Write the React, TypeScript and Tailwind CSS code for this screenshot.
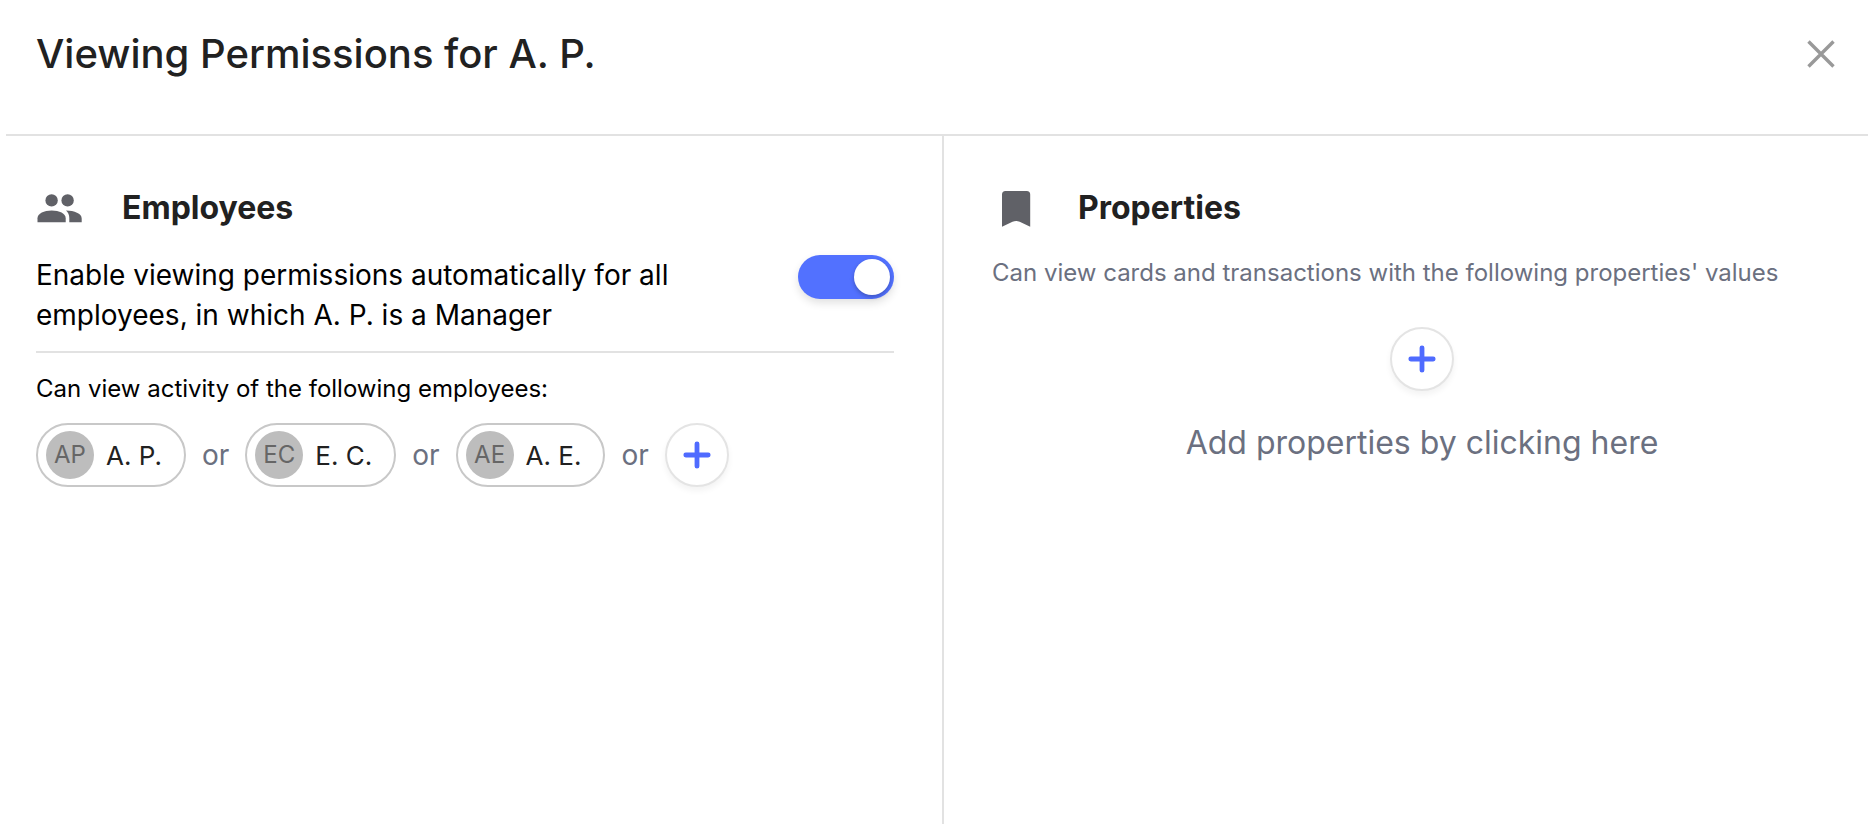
import { useState } from 'react';
import type { ReactNode } from 'react';

interface Employee {
  initials: string;
  name: string;
}

const employees: Employee[] = [
  { initials: 'AP', name: 'A. P.' },
  { initials: 'EC', name: 'E. C.' },
  { initials: 'AE', name: 'A. E.' },
];

function PeopleIcon() {
  return (
    <svg viewBox="0 0 48 48" className="size-12" fill="currentColor" aria-hidden="true">
      <circle cx="15.6" cy="16.4" r="6.2" />
      <circle cx="31.6" cy="16.4" r="6.2" />
      <path d="M1.5 38.3v-4.1c0-4.8 6.6-7.8 14.2-7.8s14 3 14 7.8v4.1z" />
      <path d="M30 26.6c8.400.2 15.700 2.900 15.700 7.800v3.900H33.300v-4.200c0-3.200-1.200-5.600-3.300-7.500z" />
    </svg>
  );
}

function BookmarkIcon() {
  return (
    <svg viewBox="0 0 48 48" className="size-12" fill="currentColor" aria-hidden="true">
      <path d="M13.500 7h21.200a3.500 3.500 0 0 1 3.500 3.500v32.200l-10.500-5c-2.500-1.100-4.700-1.100-7.200 0l-10.500 5V10.500A3.500 3.500 0 0 1 13.500 7z" />
    </svg>
  );
}

function AddButton({ label }: { label: string }) {
  return (
    <button
      type="button"
      aria-label={label}
      className="flex size-16 shrink-0 items-center justify-center rounded-full border-2 border-[#e4e4e4] bg-white text-[#4f6bff] shadow-[0_4px_6px_rgba(0,0,0,0.05)]"
    >
      <svg viewBox="0 0 28 28" className="size-7" fill="none" stroke="currentColor" strokeWidth="4.8" strokeLinecap="round">
        <path d="M14 2.8v22.4M2.8 14h22.4" />
      </svg>
    </button>
  );
}

function EmployeeChip({ initials, name }: Employee) {
  return (
    <button type="button" className="flex h-16 items-center gap-3 rounded-full border-2 border-[#c8c8c8] bg-white pl-2 pr-[22px]">
      <span className="flex size-12 items-center justify-center rounded-full bg-[#bdbdbd] text-[24px] text-[#666666]">
        {initials}
      </span>
      <span className="text-[26px] text-[#212121]">{name}</span>
    </button>
  );
}

function SectionTitle({ icon, children }: { icon: ReactNode; children: ReactNode }) {
  return (
    <div className="flex h-12 items-center gap-[38px] text-[#606167]">
      {icon}
      <h2 className="text-[32px] font-bold text-[#212121]">{children}</h2>
    </div>
  );
}

export default function App() {
  const [autoEnabled, setAutoEnabled] = useState(true);

  return (
    <div className="flex min-h-screen flex-col bg-white pl-1.5 font-[Inter,sans-serif]">
      <header className="flex items-start justify-between border-b-2 border-[#e2e2e2] pb-14 pl-[30px] pr-[33px] pt-[30px]">
        <h1 className="text-[40px] font-medium leading-12 text-[#212121]">Viewing Permissions for A. P.</h1>
        <button type="button" aria-label="Close" className="flex h-12 items-center text-[#999999]">
          <svg viewBox="0 0 28 28" className="size-7" fill="none" stroke="currentColor" strokeWidth="3.4">
            <path d="M1.5 1.5l25 25M26.5 1.5l-25 25" />
          </svg>
        </button>
      </header>

      <main className="grid flex-1 grid-cols-[938fr_924fr]">
        <section className="border-r-2 border-[#e2e2e2] pl-[30px] pr-12 pt-12">
          <SectionTitle icon={<PeopleIcon />}>Employees</SectionTitle>

          <div className="mt-[23px] flex items-start justify-between border-b-2 border-[#e2e2e2] pb-4">
            <label htmlFor="auto-permissions" className="max-w-[660px] text-[28px] leading-10 text-black">
              Enable viewing permissions automatically for all employees, in which A. P. is a Manager
            </label>
            <input
              id="auto-permissions"
              type="checkbox"
              role="switch"
              checked={autoEnabled}
              onChange={(e) => setAutoEnabled(e.target.checked)}
              className="flex h-11 w-24 shrink-0 cursor-pointer appearance-none items-center rounded-full bg-gray-300 px-1 shadow-[0_4px_8px_rgba(0,0,0,0.12)] before:size-9 before:rounded-full before:bg-white before:shadow-[0_2px_4px_rgba(0,0,0,0.25)] checked:justify-end checked:bg-[#5271ff]"
            />
          </div>

          <p className="mt-5 text-[24px] leading-8 text-black">Can view activity of the following employees:</p>
          <div className="mt-[18px] flex flex-wrap items-center gap-4">
            {employees.map((employee) => (
              <div key={employee.initials} className="flex items-center gap-4">
                <EmployeeChip {...employee} />
                <span className="text-[28px] text-[#6b7080]">or</span>
              </div>
            ))}
            <AddButton label="Add employee" />
          </div>
        </section>

        <section className="pl-12 pr-4 pt-12">
          <SectionTitle icon={<BookmarkIcon />}>Properties</SectionTitle>
          <p className="mt-[25px] text-[24px] leading-8 text-[#6b7080]">
            Can view cards and transactions with the following properties' values
          </p>
          <div className="mt-[38px] flex flex-col items-center gap-8">
            <AddButton label="Add property" />
            <p className="text-[32px] leading-10 text-[#6b7080]">Add properties by clicking here</p>
          </div>
        </section>
      </main>
    </div>
  );
}
